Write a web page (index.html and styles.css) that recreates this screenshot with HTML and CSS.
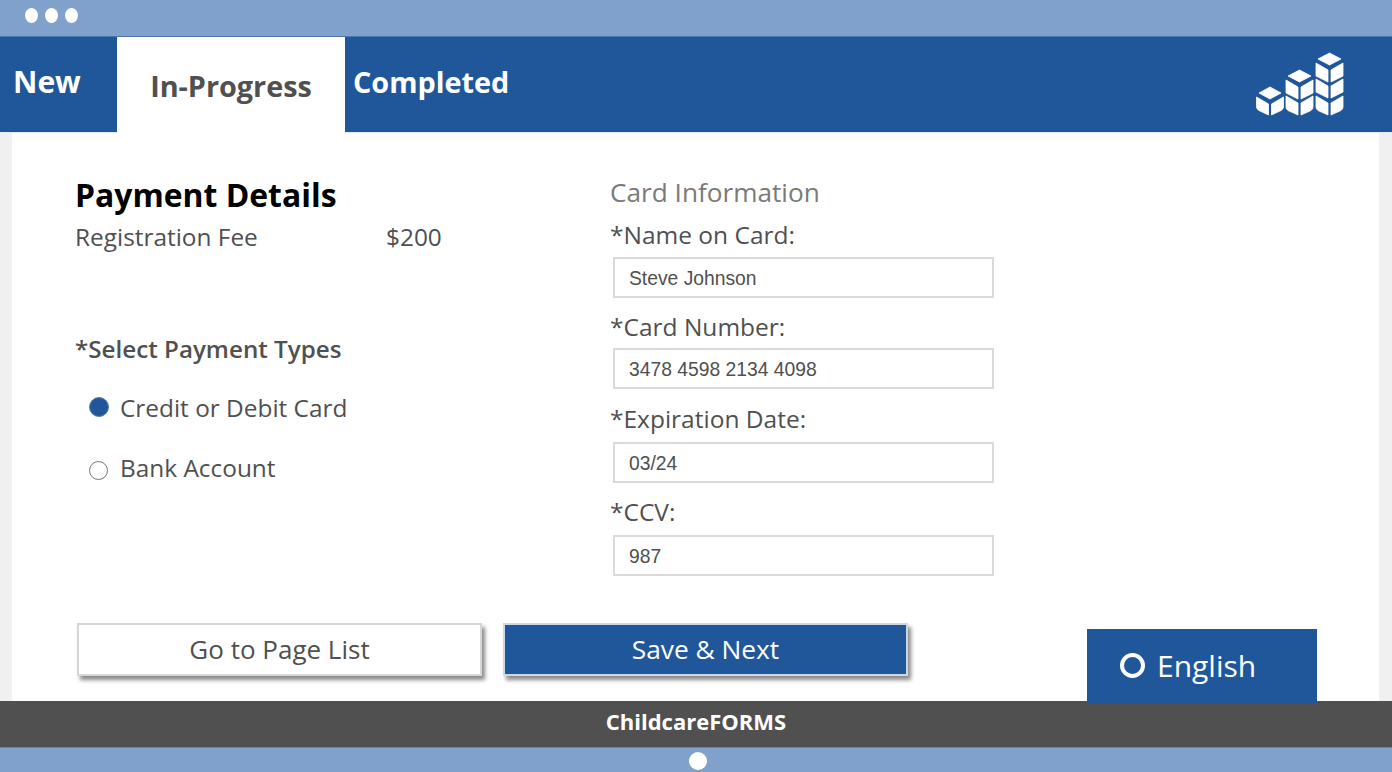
FILE: index.html
```html
<!DOCTYPE html>
<html lang="en">
<head>
    <meta charset="UTF-8">
    <meta name="viewport" content="width=device-width, initial-scale=1.0">
    <title>ChildcareFORMS</title>
    <link rel="stylesheet" href="styles.css">
</head>
<body>

    <div class="top-bar">
        <span class="dot"></span>
        <span class="dot"></span>
        <span class="dot"></span>
    </div>

    <div class="tabs">
        <a class="tab tab-new">New</a>
        <a class="tab tab-active">In-Progress</a>
        <a class="tab tab-completed">Completed</a>
        <svg class="logo" viewBox="0 0 88 64" width="88" height="64" fill="#fff" stroke="#fff" stroke-width="0.8" stroke-linejoin="round">
            <!-- small stack -->
            <path d="M14 35 L25 41 L14 47 L3 41 Z"/>
            <path d="M0.5 45 L12.5 52 V63 L3 58.5 Q0.5 57 0.5 55 Z"/>
            <path d="M27.5 45 L15.5 52 V63 L25 58.5 Q27.5 57 27.5 55 Z"/>
            <!-- middle stack -->
            <path d="M43.5 18 L55 24 L43.5 30 L32 24 Z"/>
            <path d="M30 28 L42 35 V47 L30 41 Z"/>
            <path d="M57 28 L45 35 V47 L57 41 Z"/>
            <path d="M30 44 L42 51 V63 L32 58.5 Q30 57 30 55 Z"/>
            <path d="M57 44 L45 51 V63 L55 58.5 Q57 57 57 55 Z"/>
            <!-- tall stack -->
            <path d="M73.5 1 L85 7 L73.5 13 L62 7 Z"/>
            <path d="M60 11 L72 18 V30 L60 24 Z"/>
            <path d="M87 11 L75 18 V30 L87 24 Z"/>
            <path d="M60 27 L72 34 V46 L60 40 Z"/>
            <path d="M87 27 L75 34 V46 L87 40 Z"/>
            <path d="M60 44 L72 51 V63 L62 58.5 Q60 57 60 55 Z"/>
            <path d="M87 44 L75 51 V63 L85 58.5 Q87 57 87 55 Z"/>
        </svg>
    </div>

    <div class="page">
        <div class="content">
            <div class="col-left">
                <h1>Payment Details</h1>
                <div class="fee">
                    <span class="fee-name">Registration Fee</span>
                    <span>$200</span>
                </div>
                <h3>*Select Payment Types</h3>
                <label class="radio-row">
                    <span class="radio radio-on"></span>
                    Credit or Debit Card
                </label>
                <label class="radio-row">
                    <span class="radio"></span>
                    Bank Account
                </label>
            </div>
            <div class="col-right">
                <h2>Card Information</h2>
                <label class="field-label label-name">*Name on Card:</label>
                <input class="field" type="text" value="Steve Johnson">
                <label class="field-label label-number">*Card Number:</label>
                <input class="field" type="text" value="3478 4598 2134 4098">
                <label class="field-label label-date">*Expiration Date:</label>
                <input class="field" type="text" value="03/24">
                <label class="field-label">*CCV:</label>
                <input class="field" type="text" value="987">
            </div>
        </div>
        <div class="actions">
            <button class="btn btn-light">Go to Page List</button>
            <button class="btn btn-blue">Save &amp; Next</button>
            <button class="lang"><span class="lang-ring"></span>English</button>
        </div>
    </div>

    <div class="footer">ChildcareFORMS</div>
    <div class="bottom-bar"><span class="home-dot"></span></div>

</body>
</html>
```

FILE: styles.css
```css
* {
    box-sizing: border-box;
}
html, body {
    margin: 0;
    height: 772px;
    overflow: hidden;
}
body {
    display: flex;
    flex-direction: column;
    background-color: #f0f0f0;
    color: #505050;
    font-family: "Open Sans", Arial, sans-serif;
}

.top-bar {
    display: flex;
    align-items: center;
    gap: 7px;
    height: 37px;
    padding: 0 0 5px 25px;
    background-color: #7fa1cb;
    border-bottom: 1px solid #4f76aa;
}
.dot {
    width: 13px;
    height: 15px;
    border-radius: 50%;
    background-color: white;
}

.tabs {
    display: flex;
    align-items: stretch;
    height: 96px;
    background-color: #20579b;
    border-bottom: 1px solid #e4ebf4;
}
.tab {
    display: flex;
    align-items: center;
    font-size: 28.8px;
    font-weight: 700;
    color: white;
}
.tab-new {
    width: 117px;
    padding: 0 0 6px 13px;
    font-size: 30px;
}
.tab-active {
    width: 228px;
    height: 97px;
    justify-content: center;
    background-color: white;
    color: #505050;
}
.tab-completed {
    padding: 0 0 6px 8px;
}
.logo {
    align-self: flex-start;
    margin: 15px 48px 0 auto;
    width: 88px;
    height: 64px;
}

.page {
    flex: 1;
    display: flex;
    flex-direction: column;
    margin: 0 13px 0 12px;
    padding: 36px 62px 0 63px;
    background-color: white;
}
.content {
    display: flex;
    height: 454px;
}
.col-left {
    width: 535px;
}
h1 {
    margin: 0;
    height: 50px;
    font-size: 31.9px;
    line-height: 52px;
    font-weight: 700;
    color: black;
}
.fee {
    display: flex;
    height: 36px;
    font-size: 24.4px;
    line-height: 36px;
}
.fee-name {
    width: 311px;
}
h3 {
    margin: 76px 0 0 0;
    height: 36px;
    font-size: 24.2px;
    line-height: 36px;
    font-weight: 600;
}
.radio-row {
    display: flex;
    align-items: center;
    gap: 12px;
    height: 36px;
    margin: 22px 0 0 14px;
    font-size: 24.4px;
}
.radio-row + .radio-row {
    margin-top: 24px;
}
.radio {
    width: 19px;
    height: 19px;
    margin-top: 6px;
    border: 1.5px solid #777;
    border-radius: 50%;
    background-color: white;
}
.radio-on {
    width: 20px;
    height: 20px;
    margin-top: 0;
    margin-right: -1px;
    border: 1.5px solid #5c7fae;
    background-color: #20579b;
}

.col-right {
    flex: 1;
    padding-top: 4px;
}
h2 {
    margin: 0;
    height: 38px;
    font-size: 26.2px;
    line-height: 38px;
    font-weight: 400;
    color: #7a7a7a;
}
.field-label {
    display: block;
    height: 46px;
    font-size: 24.5px;
    line-height: 46px;
    white-space: nowrap;
}
.label-name {
    line-height: 48px;
}
.label-number {
    line-height: 50px;
}
.field {
    display: block;
    width: 381px;
    height: 41px;
    margin-left: 3px;
    padding: 3px 14px 0;
    border: 2px solid #dadada;
    background-color: white;
    color: #505050;
    font-family: "Liberation Sans", Arial, sans-serif;
    font-size: 19.3px;
}
.field + .field-label {
    margin-top: 6px;
}
.field + .label-number {
    margin-top: 4px;
}
.field + .label-date {
    margin-top: 7px;
}

.actions {
    display: flex;
    align-items: flex-start;
}
.btn {
    height: 53px;
    padding-bottom: 3px;
    font-family: inherit;
    font-size: 26px;
    box-shadow: 3px 4px 4px #8a8a8a;
}
.btn-light {
    width: 405px;
    margin: 0 21px 0 2px;
    background-color: white;
    border: 2px solid #d6d6d6;
    color: #505050;
}
.btn-blue {
    width: 405px;
    background-color: #20579b;
    border: 2px solid #cdd8e6;
    color: white;
    font-size: 26.3px;
    font-weight: 500;
}
.lang {
    display: flex;
    align-items: center;
    width: 230px;
    height: 74px;
    margin: 6px 0 -2px auto;
    position: relative;
    padding: 0 0 2px 33px;
    border: none;
    background-color: #20579b;
    color: white;
    font-family: inherit;
    font-size: 30px;
}
.lang-ring {
    width: 25px;
    height: 25px;
    margin-right: 12px;
    border: 4px solid white;
    border-radius: 50%;
}

.footer {
    height: 46px;
    background-color: #505050;
    color: white;
    font-size: 22px;
    font-weight: 700;
    line-height: 41px;
    text-align: center;
}
.bottom-bar {
    display: flex;
    justify-content: center;
    align-items: center;
    height: 25px;
    padding-top: 1px;
    background-color: #7fa1cb;
    border-top: 1px solid #5f83b2;
}
.home-dot {
    width: 18px;
    height: 18px;
    border-radius: 50%;
    background-color: white;
    margin-left: 4px;
}
```
